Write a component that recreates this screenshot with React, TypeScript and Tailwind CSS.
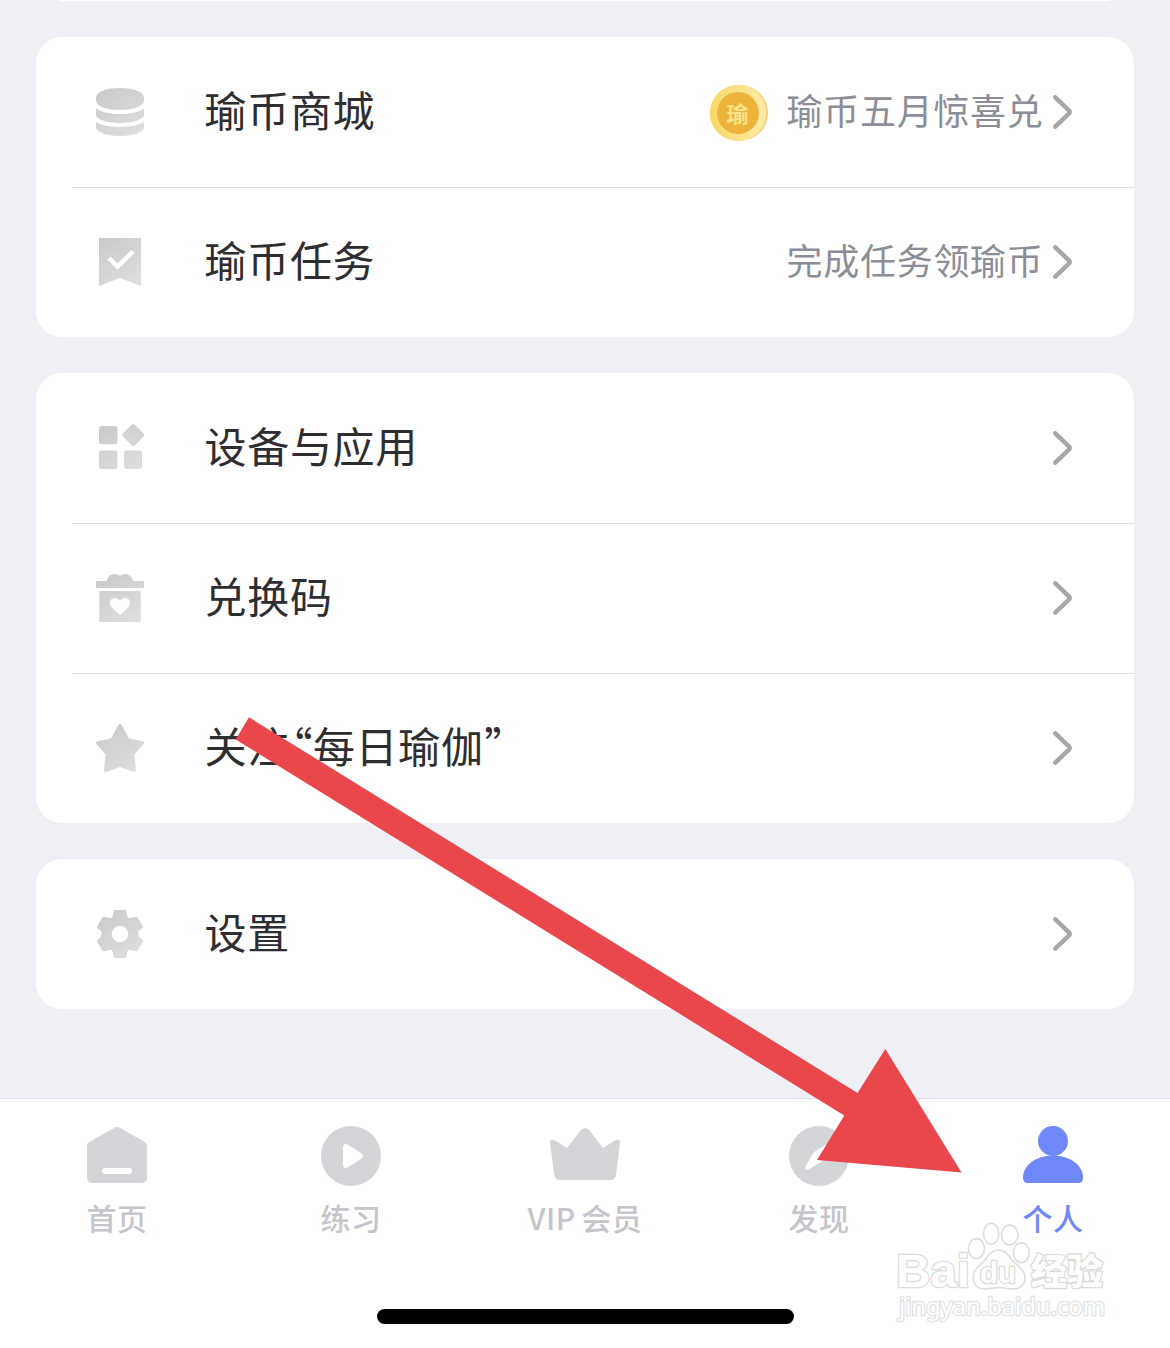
import type { ReactNode } from "react";

type Row = {
  icon: ReactNode;
  title: ReactNode;
  note?: string;
  coin?: boolean;
};

function MenuIcon({ id, children }: { id: string; children: ReactNode }) {
  return (
    <svg width="48" height="48" viewBox="0 0 48 48" className="shrink-0">
      <defs>
        <linearGradient id={id} gradientUnits="userSpaceOnUse" x1="8" y1="0" x2="40" y2="48">
          <stop offset="0" stopColor="#cacaca" />
          <stop offset="1" stopColor="#dfdfdf" />
        </linearGradient>
      </defs>
      <g fill={`url(#${id})`}>{children}</g>
    </svg>
  );
}

const icons = {
  coins: (
    <MenuIcon id="g-coins">
      <path d="M0 9C1 3 12 0 24 0S47 3 48 9V13C47 19 36 22 24 22S1 19 0 13Z" />
      <path d="M0 20.500C5 24.200 14 26 24 26s19-1.800 24-5.500V28c-3 4.500-13 7-24 7S3 32.500 0 28Z" />
      <path d="M0 33.800C5 37.200 14 39 24 39s19-1.800 24-5.200V40c-2 5-12 8-24 8S2 45 0 40Z" />
    </MenuIcon>
  ),
  task: (
    <MenuIcon id="g-task">
      <path d="M3 0H45V48L24 40L3 48Z" />
      <path d="M13 20L21.500 28.500L37 13.500" fill="none" stroke="#fff" strokeWidth="4.500" />
    </MenuIcon>
  ),
  apps: (
    <MenuIcon id="g-apps">
      <rect x="3" y="2" width="18.500" height="18.300" rx="3" />
      <rect x="28.800" y="2.700" width="16.800" height="16.800" rx="2.500" transform="rotate(45 37.200 11.100)" />
      <rect x="3" y="26.500" width="18.500" height="18.500" rx="3" />
      <rect x="28" y="26.500" width="18" height="18.500" rx="3" />
    </MenuIcon>
  ),
  gift: (
    <MenuIcon id="g-gift">
      <path d="M0 7H10.800C12 2.500 15 0 18.500 0C21 0 23 .8 24 2C25 .8 27 0 29.500 0C33 0 36 2.500 37.200 7H48V14H0Z" />
      <path d="M3.300 17H44.800V48H3.300Z" />
      <path
        d="M24 41L16 33.800C12.500 30.500 13.500 24 18.800 24C21.500 24 23.300 25.500 24 27C24.700 25.500 26.500 24 29.200 24C34.500 24 35.500 30.500 32 33.800Z"
        fill="#fff"
      />
    </MenuIcon>
  ),
  star: (
    <MenuIcon id="g-star">
      <path d="M22.300 1Q24 -1 25.700 1L33 14.500L46.600 17.200Q49 18 47.500 20L38.500 30.500L40 46Q39.800 48.500 37.500 48L24 43L10.500 48Q8.200 48.500 8 46L9.500 30.500L.5 20Q-1 18 1.400 17.200L15 14.500Z" />
    </MenuIcon>
  ),
  gear: (
    <MenuIcon id="g-gear">
      <path
        fillRule="evenodd"
        d="M19 0H29Q30 0 30.200 1L31.500 6.500Q32 8 33.500 8.200L40 6.800Q41 6.800 41.600 7.500L47 16.500Q47.200 17.300 46.500 18L42.800 21.300Q42 24 42.800 26.500L46.500 30Q47.200 30.800 47 31.500L41.800 40.500Q41 41.400 40 41.200L33.500 39.800Q32 40 31.500 41.500L30.200 47Q30 48 29 48H19Q18 48 17.800 47L16.500 41.500Q16 40 14.500 39.800L8 41.200Q7 41.400 6.200 40.500L1 31.500Q.8 30.800 1.500 30L5.200 26.500Q6 24 5.200 21.300L1.500 18Q.8 17.300 1 16.500L6.400 7.500Q7 6.800 8 6.800L14.500 8.200Q16 8 16.500 6.500L17.800 1Q18 0 19 0ZM24 15.700A8.300 8.300 0 1 0 24 32.300A8.300 8.300 0 1 0 24 15.700Z"
      />
    </MenuIcon>
  ),
};

const groups: Row[][] = [
  [
    { icon: icons.coins, title: "瑜币商城", note: "瑜币五月惊喜兑", coin: true },
    { icon: icons.task, title: "瑜币任务", note: "完成任务领瑜币" },
  ],
  [
    { icon: icons.apps, title: "设备与应用" },
    { icon: icons.gift, title: "兑换码" },
    {
      icon: icons.star,
      title: (
        <>
          关注
          <span className="inline-block w-[23px] pl-px [font-feature-settings:'palt']">“</span>
          每日瑜伽
          <span className="pl-px [font-feature-settings:'palt']">”</span>
        </>
      ),
    },
  ],
  [{ icon: icons.gear, title: "设置" }],
];

function Coin() {
  return (
    <div className="mt-0.5 mr-[19px] flex h-[56px] w-[58px] items-center rounded-full bg-linear-to-r from-[#f8d768] via-[#fae07c] to-[#f6cf78]">
      <div className="flex h-[56px] w-[56px] items-center justify-center rounded-full bg-linear-to-r from-[#f8d865] to-[#fdeba8]">
        <div className="flex h-[42px] w-[42px] items-center justify-center rounded-full bg-[#edb33b] pb-0.5 text-[22px] leading-none font-bold text-[#fbe38b]">
          瑜
        </div>
      </div>
    </div>
  );
}

function MenuRow({ row, first }: { row: Row; first: boolean }) {
  return (
    <div className="pl-9">
      <div
        className={
          first
            ? "flex h-[150px] items-center pr-[59px] pl-6"
            : "flex h-[150px] items-center border-t border-[#dedee0] pr-[59px] pb-px pl-6"
        }
      >
        {row.icon}
        <div className="ml-[60.5px] flex-1 pb-1.5 text-[42px] leading-[60px] tracking-[0.7px] whitespace-nowrap text-[#2d2d32]">
          {row.title}
        </div>
        {row.coin && <Coin />}
        {row.note && (
          <div className="mr-[7.5px] pb-1.5 text-[36px] leading-[52px] tracking-[0.7px] text-[#8b8d99]">{row.note}</div>
        )}
        <svg width="24" height="40" viewBox="0 0 24 40" className="shrink-0">
          <path
            d="M4.300 5.300L18 18.500Q19.300 20 18 21.500L4.300 34.700"
            fill="none"
            stroke="#a6a7aa"
            strokeWidth="4.500"
            strokeLinecap="round"
          />
        </svg>
      </div>
    </div>
  );
}

const tabs = [
  {
    label: "首页",
    icon: (
      <>
        <path d="M33 8Q36 6 39 8L63 21.500Q66 23.300 66 26.500V57Q66 63 60 63H12Q6 63 6 57V26.500Q6 23.300 9 21.500Z" />
        <rect x="21" y="48" width="30" height="6" rx="3" fill="#fff" />
      </>
    ),
  },
  {
    label: "练习",
    icon: (
      <>
        <circle cx="36" cy="36" r="30" />
        <path d="M28 28Q28 22 33.500 25L46 33Q50 36 46 39L33.500 47Q28 50 28 44Z" fill="#fff" />
      </>
    ),
  },
  {
    label: "VIP 会员",
    icon: (
      <path d="M31.500 10.500Q36 5.500 40.500 10.500L54 28L66.500 20.300Q71 18.500 71 23L67 55Q66 60 61 60H11Q6 60 5.300 55L1 23Q1 18.500 5.500 20.300L18 28Z" />
    ),
  },
  {
    label: "发现",
    icon: (
      <>
        <circle cx="36" cy="36" r="30" />
        <path d="M22.500 46.500L29.500 34.500Q30.500 32.500 32.500 31L46.500 22.500Q50.500 21.500 49.500 25.500L42.500 37.500Q41.500 39.500 39.500 41L25.500 49.500Q21.500 50.500 22.500 46.500Z" fill="#fff" />
      </>
    ),
  },
  {
    label: "个人",
    active: true,
    icon: (
      <>
        <circle cx="36" cy="21" r="15" />
        <path d="M36 35.500C53 35.500 66 45.500 66 57.500Q66 63 61 63H11Q6 63 6 57.500C6 45.500 19 35.500 36 35.500Z" />
      </>
    ),
  },
];

function TabBar() {
  return (
    <nav className="flex h-[250px] flex-col items-center border-t border-[#dcdce2] bg-white">
      <div className="grid w-full grid-cols-5 pt-[21px]">
        {tabs.map((tab) => (
          <div
            key={tab.label}
            className={tab.active ? "flex flex-col items-center text-[#6f88f8]" : "flex flex-col items-center text-[#c5c5cc]"}
          >
            <svg
              width="72"
              height="72"
              viewBox="0 0 72 72"
              className={tab.active ? "fill-[#6f88f8]" : "fill-[#d4d5d9]"}
            >
              {tab.icon}
            </svg>
            <span className="mt-[3px] text-[30px] leading-[44px] font-medium tracking-[0.6px] [word-spacing:-2px]">
              {tab.label}
            </span>
          </div>
        ))}
      </div>
      <div className="mt-[70px] h-[15px] w-[417px] rounded-full bg-black" />
    </nav>
  );
}

function Arrow() {
  return (
    <svg width="1170" height="1348" viewBox="0 0 1170 1348" className="pointer-events-none absolute top-0 left-0">
      <path d="M249 717.300L857.500 1093L885.300 1049L961.500 1172.500L817 1160L844.300 1115.500L235.700 739.500Z" fill="#e9474b" />
    </svg>
  );
}

function Watermark() {
  return (
    <svg width="230" height="125" viewBox="890 1210 230 125" className="pointer-events-none absolute top-[1210px] left-[890px]">
      <g fill="#fff" stroke="#dcdcdc" strokeWidth="1.500">
        <ellipse cx="976.500" cy="1248.500" rx="8" ry="10" />
        <ellipse cx="991.200" cy="1233.700" rx="7.700" ry="10.500" />
        <ellipse cx="1009.700" cy="1235" rx="8.200" ry="10" />
        <ellipse cx="1021.300" cy="1252.700" rx="8" ry="10" />
        <path d="M998.500 1250C1005 1250 1009 1255 1012 1260C1017 1266 1025 1269 1025 1278C1025 1286 1019 1289 1013 1289C1007 1289 1004 1287.500 998.500 1287.500C993 1287.500 990 1289 984 1289C977 1289 973 1284 973 1277C973 1269 980 1266 985 1260C988 1255 992 1250 998.500 1250Z" />
      </g>
      <g fill="#fff" stroke="#dcdcdc" strokeWidth="2.600" paintOrder="stroke" strokeLinejoin="round">
        <text x="896" y="1287" fontSize="46" fontWeight="700" fontFamily="'Liberation Sans', sans-serif" textLength="74" lengthAdjust="spacingAndGlyphs">
          Bai
        </text>
        <text x="980" y="1283" fontSize="29" fontWeight="700" fontFamily="'Liberation Sans', sans-serif" textLength="36" lengthAdjust="spacingAndGlyphs">
          du
        </text>
        <text x="1031" y="1285" fontSize="36" fontWeight="900" fontFamily="'Noto Sans CJK SC', sans-serif" textLength="72" lengthAdjust="spacingAndGlyphs">
          经验
        </text>
        <text x="899" y="1315" fontSize="24" fontWeight="400" stroke="#e3e3e3" fontFamily="'Noto Sans', sans-serif" textLength="206" lengthAdjust="spacingAndGlyphs">
          jingyan.baidu.com
        </text>
      </g>
    </svg>
  );
}

export default function App() {
  return (
    <div className="relative flex h-[1348px] w-[1170px] flex-col overflow-hidden bg-[#eff0f5] font-['Noto_Sans_CJK_SC',sans-serif]">
      <div className="mx-[60px] h-px shrink-0 bg-white" />
      <main className="flex flex-1 flex-col gap-9 px-9 pt-9">
        {groups.map((rows, i) => (
          <section key={i} className="rounded-[26px] bg-white">
            {rows.map((row, j) => (
              <MenuRow key={j} row={row} first={j === 0} />
            ))}
          </section>
        ))}
      </main>
      <TabBar />
      <Arrow />
      <Watermark />
    </div>
  );
}
